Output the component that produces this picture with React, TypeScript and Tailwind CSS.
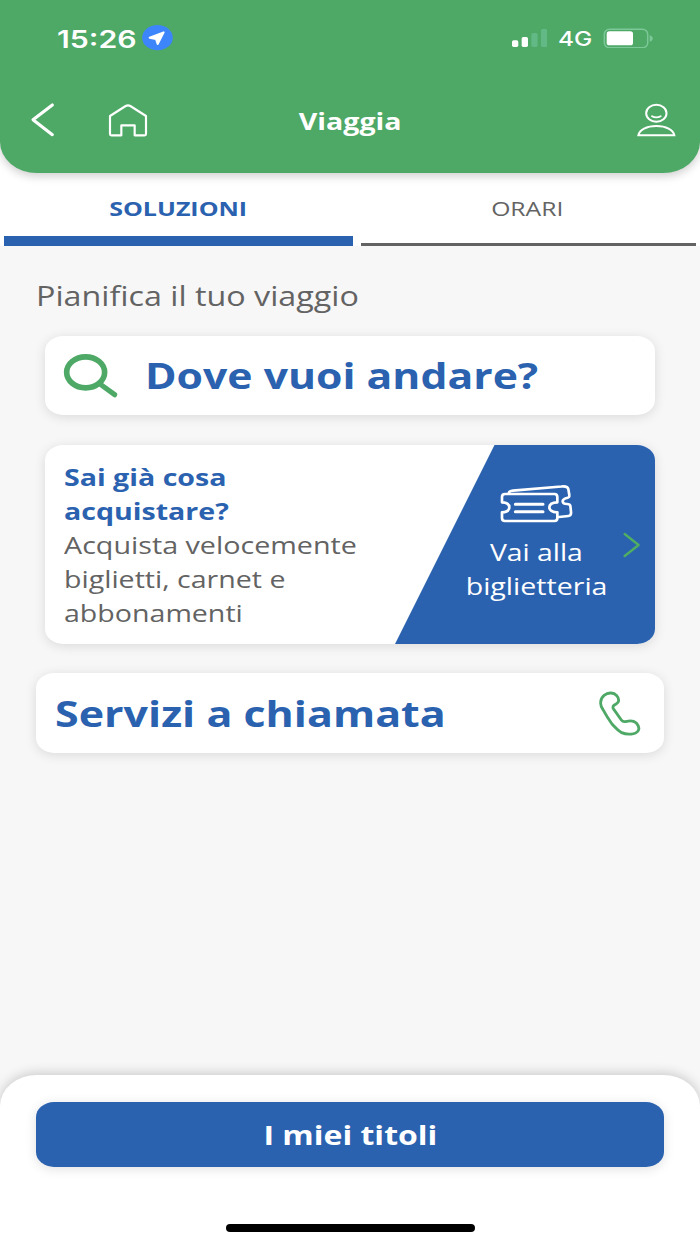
import { clsx } from "clsx";
import type { ReactNode } from "react";

// single line of text, stretched horizontally by the scale-x class it is given
function Wide({ className, children }: { className?: string; children: ReactNode }) {
  return (
    <span className={clsx("inline-block whitespace-nowrap", className)}>
      {children}
    </span>
  );
}

function StatusBar() {
  return (
    <div className="flex h-[76px] items-center pl-[57px] pr-[46px] font-['Inter',sans-serif]">
      <div className="w-[85px] pt-[3px]">
        <Wide className="origin-left scale-x-[1.26] text-[24px] font-semibold">15:26</Wide>
      </div>
      <svg viewBox="426 77 93 76" className="h-[25.3px] w-[31px]">
        <ellipse cx="472.5" cy="115" rx="46" ry="38" fill="#3d85fb" />
        <path
          d="M491 99 L449 115 L468 119 L473 134 Z"
          fill="white"
          stroke="white"
          strokeWidth="6"
          strokeLinejoin="round"
        />
      </svg>
      <svg viewBox="486 87 106 54" className="ml-auto h-[18px] w-[35.3px]">
        <rect x="486" y="121" width="19" height="20" rx="5" fill="white" />
        <rect x="515" y="111" width="19" height="30" rx="5" fill="white" />
        <rect x="544" y="99" width="19" height="42" rx="5" fill="#62b985" />
        <rect x="573" y="87" width="19" height="54" rx="5" fill="#62b985" />
      </svg>
      <div className="ml-[11px] w-[45px] pt-0.5">
        <Wide className="origin-left scale-x-[1.22] text-[20px] font-medium">4G</Wide>
      </div>
      <svg viewBox="760 83 152 62" className="h-[20.7px] w-[50.7px]">
        <rect x="764" y="87" width="130" height="55" rx="15" fill="none" stroke="#7cc898" strokeWidth="4.5" />
        <rect x="771" y="93" width="79" height="42" rx="8" fill="white" />
        <path d="M900 105 Q909 107 909 114.500 Q909 122 900 124 Z" fill="#7cc898" />
      </svg>
    </div>
  );
}

function Header() {
  return (
    <header className="relative z-10 h-[172.5px] rounded-b-[37px_31px] bg-[#4ea866] text-white shadow-[0_3px_10px_rgba(0,0,0,0.2)]">
      <StatusBar />
      <div className="grid h-[88px] grid-cols-3 items-center">
        <div className="flex items-center gap-[52.6px] pl-[30.3px]">
          <svg viewBox="92 306 74 106" className="h-[35.3px] w-[24.7px]" fill="none" stroke="white">
            <path d="M159 315 L101 359 L159 404" strokeWidth="9.5" strokeLinecap="round" strokeLinejoin="round" />
          </svg>
          <svg viewBox="324 308 120 104" className="h-[34.7px] w-[40px]" fill="none" stroke="white">
            <path
              d="M364 405 H334 Q330 405 330 401 V347 L377 317 Q384 313 391 317 L438 347 V401 Q438 405 434 405 H404 V375 H364 Z"
              strokeWidth="6.5"
              strokeLinejoin="round"
            />
          </svg>
        </div>
        <h1 className="pt-0.5 text-center text-[24px] font-bold">
          <Wide className="scale-x-[1.19]">Viaggia</Wide>
        </h1>
        <svg
          viewBox="860 308 122 104"
          className="mr-[23px] h-[34.7px] w-[40.7px] justify-self-end"
          fill="none"
          stroke="white"
          strokeWidth="6"
        >
          <ellipse cx="921" cy="339" rx="30.5" ry="25.5" />
          <path d="M908 347.500 Q921 355 934 347.500" strokeLinecap="round" strokeWidth="5.5" />
          <path d="M867 405 C870 388 892 377 921 377 C950 377 972 388 975 405 Z" />
        </svg>
      </div>
    </header>
  );
}

function Tabs() {
  return (
    <nav className="flex h-[73.3px] gap-2 bg-white px-1 text-[20px]">
      <div className="flex w-[349px] items-center justify-center border-b-[10px] border-[#2b62b0] pr-px pt-[9px] font-bold text-[#2b62b0]">
        <Wide className="scale-x-[1.25]">SOLUZIONI</Wide>
      </div>
      <div className="flex flex-1 items-center justify-center border-b-[3px] border-[#636363] pr-0.5 pt-0.5 text-[#636363]">
        <Wide className="scale-x-[1.235]">ORARI</Wide>
      </div>
    </nav>
  );
}

const card = "rounded-[18px/15px] bg-white shadow-[0_2px_12px_rgba(0,0,0,0.12)]";

function SearchCard() {
  return (
    <div className={clsx(card, "mx-[9px] mt-[22px] flex h-[79px] items-center pl-[16.5px]")}>
      <svg viewBox="95 80 175 140" className="h-[46.7px] w-[58.3px]" fill="none" stroke="#4ea866">
        <ellipse cx="166" cy="141" rx="57" ry="46.5" strokeWidth="17" />
        <path d="M209 176 L253 208" strokeWidth="15.5" strokeLinecap="round" />
      </svg>
      <Wide className="ml-[25px] origin-left scale-x-[1.22] pt-0.5 text-[35px] font-bold text-[#2b62b0]">
        Dove vuoi andare?
      </Wide>
    </div>
  );
}

function TicketIcon() {
  return (
    <svg
      viewBox="355 145 230 125"
      className="mr-[1.5px] h-[41.7px] w-[76.7px]"
      fill="none"
      stroke="white"
      strokeWidth="8"
      strokeLinecap="round"
      strokeLinejoin="round"
    >
      <path d="M376 178 H524 Q533 178 533 187 V203 C515 204 509 211 509 218 C509 226 515 232 533 233 V250 Q533 259 524 259 H376 Q367 259 367 250 V233 C383 232 389 226 389 218 C389 210 383 204 367 203 V187 Q367 178 376 178 Z" />
      <path d="M388 173 Q390 169 400 168 L545 155.500 Q564 153 566 164 L569 182 Q570 187 564 189 Q548 193 549 201 Q550 208 562 208 Q571 208 572 214 L574 232 Q575 243 566 244 L538 247" />
      <path d="M407 209 H490 M407 231 H490" strokeWidth="9" />
    </svg>
  );
}

function TicketOfficeCard() {
  return (
    <div className={clsx(card, "mx-[9px] mt-[30px] flex h-[199px] overflow-hidden")}>
      <div className="w-[350px] pl-[18.5px] pt-[15px] text-[24px] leading-[34px] text-[#636363]">
        <div className="font-bold text-[#2b62b0]">
          <div><Wide className="origin-left scale-x-[1.19]">Sai già cosa</Wide></div>
          <div><Wide className="origin-left scale-x-[1.19]">acquistare?</Wide></div>
        </div>
        <div><Wide className="origin-left scale-x-[1.195]">Acquista velocemente</Wide></div>
        <div><Wide className="origin-left scale-x-[1.19]">biglietti, carnet e</Wide></div>
        <div><Wide className="origin-left scale-x-[1.19]">abbonamenti</Wide></div>
      </div>
      <div className="flex flex-1 justify-end bg-[#2b62b0] text-white [clip-path:polygon(99.5px_0,100%_0,100%_100%,0_100%)]">
        <div className="flex w-[142.5px] flex-col items-center pt-[38.3px] text-[24px] leading-[34px]">
          <TicketIcon />
          <Wide className="mt-[10.5px] scale-x-[1.18]">Vai alla</Wide>
          <Wide className="scale-x-[1.19]">biglietteria</Wide>
        </div>
        <svg
          viewBox="730 290 52 78"
          className="ml-[15.3px] mr-[14.3px] mt-[86.7px] h-[26px] w-[17.3px]"
          fill="none"
          stroke="#4fae62"
        >
          <path d="M735 296 L777 329 L735 362" strokeWidth="7" strokeLinecap="round" strokeLinejoin="round" />
        </svg>
      </div>
    </div>
  );
}

function OnCallCard() {
  return (
    <div className={clsx(card, "mt-[29.5px] flex h-[79.5px] items-center justify-between pl-[18.5px] pr-[22.5px]")}>
      <Wide className="origin-left scale-x-[1.228] pt-[3px] text-[35px] font-bold text-[#2b62b0]">
        Servizi a chiamata
      </Wide>
      <svg viewBox="710 85 135 145" className="h-[48.3px] w-[45px]" fill="none" stroke="#4ea866">
        <path
          d="M721 125 C721 108 738 96 752 97 C766 98 775 108 775 119 C775 128 768 129 762 133 C756 137 757 142 761 147 L783 178 C788 185 793 184 799 182 C812 179 820 180 828 187 C836 196 838 204 833 211 C826 221 801 224 784 216 C771 209 766 202 755 190 C742 172 735 160 728 147 C722 138 720 133 721 125 Z"
          strokeWidth="8.5"
          strokeLinejoin="round"
        />
      </svg>
    </div>
  );
}

function Footer() {
  return (
    <footer className="flex h-[169px] flex-col items-center rounded-t-[37px_31px] bg-white px-9 pt-[27px] shadow-[0_-2px_12px_rgba(0,0,0,0.18)]">
      <button className="h-[64.5px] w-full rounded-[18px/15px] bg-[#2b62b0] pt-0.5 text-[27px] font-bold text-white shadow-[0_2px_12px_rgba(0,0,0,0.12)]">
        <Wide className="scale-x-[1.185]">I miei titoli</Wide>
      </button>
      <div className="mt-[57.5px] h-2 w-[249px] rounded-full bg-black" />
    </footer>
  );
}

export default function App() {
  return (
    <div className="flex h-[1244px] w-[700px] flex-col overflow-hidden bg-[#f7f7f7] font-['Open_Sans','Noto_Sans',sans-serif]">
      <div className="bg-white">
        <Header />
        <Tabs />
      </div>
      <main className="flex-1 px-9 pt-[32.2px]">
        <h2 className="h-9 text-[26.5px] leading-9 text-[#636363]">
          <Wide className="origin-left scale-x-[1.218]">Pianifica il tuo viaggio</Wide>
        </h2>
        <SearchCard />
        <TicketOfficeCard />
        <OnCallCard />
      </main>
      <Footer />
    </div>
  );
}
